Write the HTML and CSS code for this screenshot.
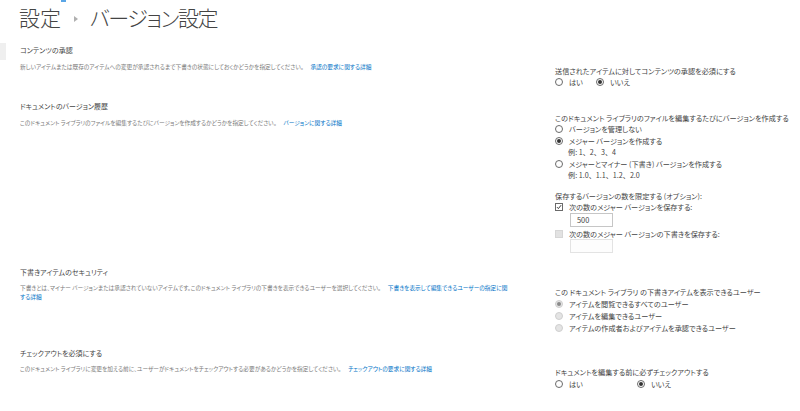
FILE: index.html
```html
<!DOCTYPE html>
<html lang="ja">
<head>
<meta charset="utf-8">
<title>バージョン設定</title>
<link rel="stylesheet" href="styles.css">
</head>
<body>
<header class="title-bar">
  <span class="top-mark"></span>
  <h1 class="page-title">
    <span class="crumb">設定</span>
    <svg class="crumb-sep" width="6" height="8" viewBox="0 0 6 8"><path d="M1 1 L5 4 L1 7 Z" fill="#b0b0b0"/></svg>
    <span class="crumb crumb-current">バージョン設定</span>
  </h1>
</header>
<div class="page">
  <nav class="leftnav"><div class="nav-item"></div></nav>
  <main class="content">
    <section class="section">
      <div class="sec-left">
        <h2 class="sec-head">コンテンツの承認</h2>
        <p class="sec-desc">新しいアイテムまたは既存のアイテムへの変更が承認されるまで下書きの状態にしておくかどうかを指定してください。<a class="more" href="#">承認の要求に関する詳細</a></p>
      </div>
      <div class="sec-right">
        <div class="label">送信されたアイテムに対してコンテンツの承認を必須にする</div>
        <div class="choice-row">
          <span class="opt opt-narrow"><span class="radio"></span>はい</span>
          <span class="opt"><span class="radio on"></span>いいえ</span>
        </div>
      </div>
    </section>

    <section class="section">
      <div class="sec-left">
        <h2 class="sec-head">ドキュメントのバージョン履歴</h2>
        <p class="sec-desc">このドキュメント ライブラリのファイルを編集するたびにバージョンを作成するかどうかを指定してください。<a class="more" href="#">バージョンに関する詳細</a></p>
      </div>
      <div class="sec-right right-tight">
        <div class="label">このドキュメント ライブラリのファイルを編集するたびにバージョンを作成する</div>
        <div class="opt-line"><span class="radio"></span>バージョンを管理しない</div>
        <div class="opt-line"><span class="radio on"></span>メジャー バージョンを作成する</div>
        <div class="example">例: 1、2、3、4</div>
        <div class="opt-line"><span class="radio"></span>メジャーとマイナー (下書き) バージョンを作成する</div>
        <div class="example">例: 1.0、1.1、1.2、2.0</div>
        <div class="label limit-label">保存するバージョンの数を限定する (オプション):</div>
        <div class="opt-line"><span class="check on"><svg width="8" height="8" viewBox="0 0 8 8"><path d="M1.3 4.2 L3.2 6.1 L6.8 1.6" fill="none" stroke="#333" stroke-width="1.3"/></svg></span>次の数のメジャー バージョンを保存する:</div>
        <div class="num-box">500</div>
        <div class="opt-line off-line"><span class="check off"></span>次の数のメジャー バージョンの下書きを保存する:</div>
        <div class="num-box disabled"></div>
      </div>
    </section>

    <section class="section">
      <div class="sec-left">
        <h2 class="sec-head">下書きアイテムのセキュリティ</h2>
        <p class="sec-desc">下書きとは、マイナー バージョンまたは承認されていないアイテムです。このドキュメント ライブラリの下書きを表示できるユーザーを選択してください。<a class="more" href="#">下書きを表示して編集できるユーザーの指定に関する詳細</a></p>
      </div>
      <div class="sec-right">
        <div class="label">この ドキュメント ライブラリ の下書きアイテムを表示できるユーザー</div>
        <div class="opt-line wide"><span class="radio dis on"></span>アイテムを閲覧できるすべてのユーザー</div>
        <div class="opt-line wide"><span class="radio dis"></span>アイテムを編集できるユーザー</div>
        <div class="opt-line wide"><span class="radio dis"></span>アイテムの作成者およびアイテムを承認できるユーザー</div>
      </div>
    </section>

    <section class="section">
      <div class="sec-left">
        <h2 class="sec-head">チェックアウトを必須にする</h2>
        <p class="sec-desc">このドキュメント ライブラリに変更を加える前に、ユーザーがドキュメントをチェックアウトする必要があるかどうかを指定してください。<a class="more" href="#">チェックアウトの要求に関する詳細</a></p>
      </div>
      <div class="sec-right right-last">
        <div class="label">ドキュメントを編集する前に必ずチェックアウトする</div>
        <div class="choice-row">
          <span class="opt opt-wide"><span class="radio"></span>はい</span>
          <span class="opt"><span class="radio on"></span>いいえ</span>
        </div>
      </div>
    </section>
  </main>
</div>
</body>
</html>
```

FILE: styles.css
```css
* { box-sizing: border-box; }

html, body {
  margin: 0;
  padding: 0;
  background: #ffffff;
  font-family: "Noto Sans CJK JP", "Noto Sans", sans-serif;
  font-feature-settings: "palt" 1;
  color: #444444;
}

.title-bar {
  position: relative;
  height: 35px;
  padding-left: 19px;
}

.top-mark {
  position: absolute;
  left: 61px;
  top: 0;
  width: 5px;
  height: 2px;
  background: #5aa6e6;
}

.page-title {
  margin: 0;
  display: flex;
  align-items: center;
  height: 35px;
  font-size: 21px;
  font-weight: 300;
  color: #444444;
  line-height: 35px;
}

.crumb-current {
  letter-spacing: -1.4px;
}

.crumb-sep {
  margin: 2px 11px 0 12px;
}

.page {
  display: flex;
}

.leftnav {
  width: 6px;
  flex: none;
}

.nav-item {
  margin-top: 8px;
  height: 17px;
  background: #efefef;
}

.content {
  flex: 1;
  padding-top: 10px;
}

.section {
  display: grid;
  grid-template-columns: 549px 1fr;
  padding-bottom: 13.5px;
}

.sec-left {
  padding-left: 14px;
  padding-right: 44px;
}

.sec-head {
  margin: 0;
  font-size: 7px;
  font-weight: 400;
  line-height: 10px;
  color: #444444;
}

.sec-desc {
  margin: 6.5px 0 0;
  font-size: 5.7px;
  line-height: 9px;
  color: #7a7a7a;
}

.more {
  color: #0072c6;
  text-decoration: none;
  margin-left: 7px;
}

.sec-right {
  padding-top: 20.5px;
  font-size: 7.15px;
  color: #444444;
}

.right-tight { padding-top: 11.5px; }
.right-last { padding-top: 19.5px; }

.label {
  line-height: 11px;
  height: 11px;
}

.limit-label {
  margin-top: 9.5px;
}

.choice-row {
  display: flex;
  align-items: center;
  height: 11px;
}

.opt {
  display: flex;
  align-items: center;
}

.opt-narrow { width: 41px; }
.opt-wide { width: 82px; }

.opt-line {
  display: flex;
  align-items: center;
  height: 11.5px;
}

.opt-line.wide { height: 12px; }

.example {
  padding-left: 13px;
  height: 11.5px;
  line-height: 11.5px;
  font-feature-settings: normal;
}

.radio {
  width: 8px;
  height: 8px;
  border: 1px solid #6a6a6a;
  border-radius: 50%;
  background: #ffffff;
  margin-right: 6px;
  display: inline-flex;
  align-items: center;
  justify-content: center;
  flex: none;
}

.radio.on::after {
  content: "";
  width: 4px;
  height: 4px;
  border-radius: 50%;
  background: #333333;
}

.radio.dis {
  border-color: #cfcfcf;
  background: #e4e4e4;
}

.radio.dis.on::after {
  background: #8a8a8a;
}

.check {
  width: 8px;
  height: 8px;
  border: 1px solid #6a6a6a;
  background: #ffffff;
  margin-right: 6px;
  display: inline-flex;
  align-items: center;
  justify-content: center;
  flex: none;
}

.check svg { display: block; }

.check.off {
  border-color: #d6d6d6;
  background: #e2e2e2;
}

.off-line {
  margin-top: 1.5px;
}

.num-box {
  margin-left: 15px;
  width: 43px;
  height: 14px;
  border: 1px solid #c6c6c6;
  font-size: 7.4px;
  line-height: 12px;
  padding-left: 6px;
  color: #444444;
  margin-top: -0.5px;
}

.num-box.disabled {
  border-color: #e3e3e3;
  background: #fdfdfd;
}
```
